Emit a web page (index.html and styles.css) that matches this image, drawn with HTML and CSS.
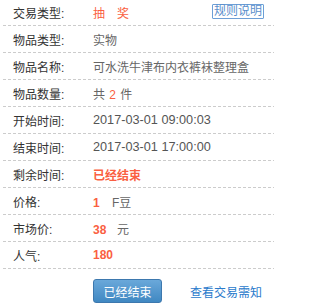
FILE: index.html
```html
<!DOCTYPE html>
<html>
<head>
<meta charset="utf-8">
<link rel="stylesheet" href="styles.css">
</head>
<body>
<div class="info">
  <div class="row first">
    <span class="label">交易类型:</span>
    <span class="value red">抽<span class="gap"></span>奖</span>
    <span class="rule">规则说明</span>
  </div>
  <div class="row">
    <span class="label">物品类型:</span>
    <span class="value">实物</span>
  </div>
  <div class="row">
    <span class="label">物品名称:</span>
    <span class="value">可水洗牛津布内衣裤袜整理盒</span>
  </div>
  <div class="row">
    <span class="label">物品数量:</span>
    <span class="value">共 <span class="red num">2</span> 件</span>
  </div>
  <div class="row">
    <span class="label">开始时间:</span>
    <span class="value date">2017-03-01 09:00:03</span>
  </div>
  <div class="row">
    <span class="label">结束时间:</span>
    <span class="value date">2017-03-01 17:00:00</span>
  </div>
  <div class="row">
    <span class="label">剩余时间:</span>
    <span class="value red strong">已经结束</span>
  </div>
  <div class="row">
    <span class="label">价格:</span>
    <span class="value"><b class="red bnum w1">1</b>F豆</span>
  </div>
  <div class="row">
    <span class="label">市场价:</span>
    <span class="value"><b class="red bnum w2">38</b>元</span>
  </div>
  <div class="row">
    <span class="label">人气:</span>
    <span class="value"><b class="red bnum">180</b></span>
  </div>
  <div class="actions">
    <button class="btn">已经结束</button>
    <a class="link" href="#">查看交易需知</a>
  </div>
</div>
</body>
</html>
```
FILE: styles.css
```css
html, body {
  margin: 0;
  padding: 0;
  background: #fff;
}
body {
  width: 274px;
  height: 308px;
  overflow: hidden;
  font-family: "Liberation Sans", "Noto Sans CJK SC", sans-serif;
  font-size: 12px;
  color: #333;
}
.info {
  padding-left: 3px;
}
.row {
  display: flex;
  align-items: center;
  height: 26px;
  background: linear-gradient(to right, #cccccc 3px, transparent 3px) left bottom / 5px 1px repeat-x;
  padding-bottom: 1px;
  box-sizing: content-box;
}
.row.first {
  height: 25px;
}
.label {
  width: 80px;
  padding-left: 10px;
  color: #333;
  flex: none;
}
.value {
  color: #666;
  white-space: nowrap;
}
.date {
  color: #555;
  font-size: 12.7px;
}
.red {
  color: #fa5f42;
}
.strong {
  font-weight: bold;
}
.gap {
  display: inline-block;
  width: 12px;
}
.num {
  margin: 0 1px;
}
.bnum {
  font-weight: bold;
  font-size: 12px;
}
.w1 {
  display: inline-block;
  width: 19px;
}
.w2 {
  display: inline-block;
  width: 24px;
}
.rule {
  margin-left: auto;
  margin-right: 10px;
  margin-top: -2px;
  border: 1px solid #6d9fd6;
  color: #5b8fcc;
  line-height: 13px;
  padding: 0 1px;
  border-radius: 1px;
}
.actions {
  display: flex;
  align-items: center;
  padding-left: 90px;
  margin-top: 10px;
}
.btn {
  width: 69px;
  height: 24px;
  border: 1px solid #3d78ae;
  border-radius: 3px;
  background: linear-gradient(to bottom, #6aa8da, #4088c2);
  color: #fff;
  font-family: "Liberation Sans", "Noto Sans CJK SC", sans-serif;
  font-size: 12px;
  padding: 0;
}
.link {
  margin-left: 28px;
  color: #2a7acb;
  text-decoration: none;
}
```
